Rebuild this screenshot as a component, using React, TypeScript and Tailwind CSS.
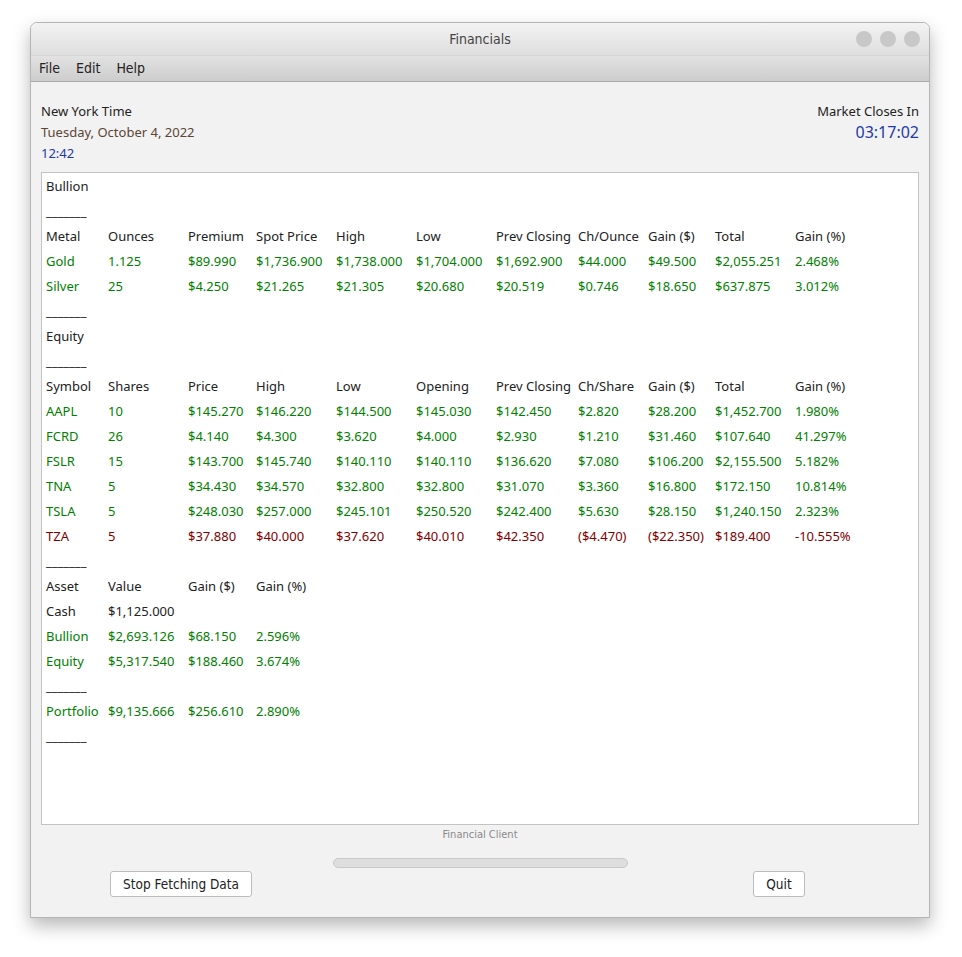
import { JSX } from "react";

const G = "text-[#008000]";
const R = "text-[#800000]";

const bullionHead = ["Metal", "Ounces", "Premium", "Spot Price", "High", "Low", "Prev Closing", "Ch/Ounce", "Gain ($)", "Total", "Gain (%)"];
const bullion = [
  ["Gold", "1.125", "$89.990", "$1,736.900", "$1,738.000", "$1,704.000", "$1,692.900", "$44.000", "$49.500", "$2,055.251", "2.468%"],
  ["Silver", "25", "$4.250", "$21.265", "$21.305", "$20.680", "$20.519", "$0.746", "$18.650", "$637.875", "3.012%"],
];

const equityHead = ["Symbol", "Shares", "Price", "High", "Low", "Opening", "Prev Closing", "Ch/Share", "Gain ($)", "Total", "Gain (%)"];
const equity = [
  ["AAPL", "10", "$145.270", "$146.220", "$144.500", "$145.030", "$142.450", "$2.820", "$28.200", "$1,452.700", "1.980%"],
  ["FCRD", "26", "$4.140", "$4.300", "$3.620", "$4.000", "$2.930", "$1.210", "$31.460", "$107.640", "41.297%"],
  ["FSLR", "15", "$143.700", "$145.740", "$140.110", "$140.110", "$136.620", "$7.080", "$106.200", "$2,155.500", "5.182%"],
  ["TNA", "5", "$34.430", "$34.570", "$32.800", "$32.800", "$31.070", "$3.360", "$16.800", "$172.150", "10.814%"],
  ["TSLA", "5", "$248.030", "$257.000", "$245.101", "$250.520", "$242.400", "$5.630", "$28.150", "$1,240.150", "2.323%"],
];
const tza = ["TZA", "5", "$37.880", "$40.000", "$37.620", "$40.010", "$42.350", "($4.470)", "($22.350)", "$189.400", "-10.555%"];

function Row({ cells, color }: { cells: string[]; color?: string }): JSX.Element {
  return (
    <div className={`grid grid-cols-[62px_80px_68px_80px_80px_80px_82px_70px_67px_80px_auto] h-[25px] leading-[25px] whitespace-nowrap ${color ?? "text-[#222]"}`}>
      {cells.map((c, i) => (
        <span key={i}>{c}</span>
      ))}
    </div>
  );
}

function Dash(): JSX.Element {
  return <div className="h-[25px] leading-[25px] text-[#222]">_______</div>;
}

export default function App(): JSX.Element {
  return (
    <div className="min-h-[957px] bg-white pt-[22px] pl-[30px] font-['Noto_Sans',sans-serif]">
      <div className="w-[900px] h-[896px] flex flex-col bg-[#f2f2f2] border border-[#b4b4b4] rounded-t-[7px] shadow-[0_8px_18px_rgba(0,0,0,0.28)] overflow-hidden">
        {/* title bar */}
        <div className="h-[32px] relative flex items-center justify-center bg-gradient-to-b from-[#f3f3f3] to-[#dedede]">
          <span className="text-[14px] text-[#444] font-['DejaVu_Sans_Condensed','Liberation_Sans_Narrow',sans-serif]">Financials</span>
          <div className="absolute right-[9px] top-[8px] flex gap-[8px]">
            <span className="w-[16px] h-[16px] rounded-full bg-[#c8c8c8]" />
            <span className="w-[16px] h-[16px] rounded-full bg-[#c8c8c8]" />
            <span className="w-[16px] h-[16px] rounded-full bg-[#c8c8c8]" />
          </div>
        </div>
        {/* menu bar */}
        <div className="h-[27px] flex items-center gap-[16px] pl-[8px] bg-gradient-to-b from-[#e2e2e2] to-[#cdcdcd] border-t border-[#d6d6d6] border-b border-b-[#a9a9a9] text-[14px] text-[#222] font-['DejaVu_Sans_Condensed','Liberation_Sans_Narrow',sans-serif]">
          <span>File</span>
          <span>Edit</span>
          <span>Help</span>
        </div>
        {/* body */}
        <div className="flex-1 flex flex-col px-[10px] pt-[19px] text-[13px]">
          <div className="flex justify-between">
            <div className="flex flex-col leading-[21px]">
              <span className="text-[#222]">New York Time</span>
              <span className="text-[#5c4535]">Tuesday, October 4, 2022</span>
              <span className="text-[#1d3aa8]">12:42</span>
            </div>
            <div className="flex flex-col items-end leading-[21px]">
              <span className="text-[#222]">Market Closes In</span>
              <span className="text-[#1d3aa8] text-[16px]">03:17:02</span>
            </div>
          </div>
          <div className="mt-[8px] h-[653px] bg-white border border-[#c3c3c3] pl-[4px] pt-[1px]">
            <div className="h-[25px] leading-[25px] text-[#222]">Bullion</div>
            <Dash />
            <Row cells={bullionHead} />
            {bullion.map((r) => (
              <Row key={r[0]} cells={r} color={G} />
            ))}
            <Dash />
            <div className="h-[25px] leading-[25px] text-[#222]">Equity</div>
            <Dash />
            <Row cells={equityHead} />
            {equity.map((r) => (
              <Row key={r[0]} cells={r} color={G} />
            ))}
            <Row cells={tza} color={R} />
            <Dash />
            <Row cells={["Asset", "Value", "Gain ($)", "Gain (%)"]} />
            <Row cells={["Cash", "$1,125.000"]} />
            <Row cells={["Bullion", "$2,693.126", "$68.150", "2.596%"]} color={G} />
            <Row cells={["Equity", "$5,317.540", "$188.460", "3.674%"]} color={G} />
            <Dash />
            <Row cells={["Portfolio", "$9,135.666", "$256.610", "2.890%"]} color={G} />
            <Dash />
          </div>
          <div className="h-[20px] flex items-center justify-center text-[11px] text-[#8a8a8a] font-['DejaVu_Sans_Condensed','Liberation_Sans_Narrow',sans-serif]">
            Financial Client
          </div>
          <div className="flex justify-center mt-[13px]">
            <div className="w-[295px] h-[10px] rounded-full bg-[#dedede] border border-[#c9c9c9]" />
          </div>
          <div className="flex justify-between mt-[3px] pl-[69px] pr-[114px]">
            <button className="h-[26px] w-[142px] bg-white border border-[#bdbdbd] rounded-[3px] text-[13.5px] text-[#222] font-['DejaVu_Sans_Condensed','Liberation_Sans_Narrow',sans-serif]">
              Stop Fetching Data
            </button>
            <button className="h-[26px] w-[52px] bg-white border border-[#bdbdbd] rounded-[3px] text-[13.5px] text-[#222] font-['DejaVu_Sans_Condensed','Liberation_Sans_Narrow',sans-serif]">
              Quit
            </button>
          </div>
        </div>
      </div>
    </div>
  );
}
